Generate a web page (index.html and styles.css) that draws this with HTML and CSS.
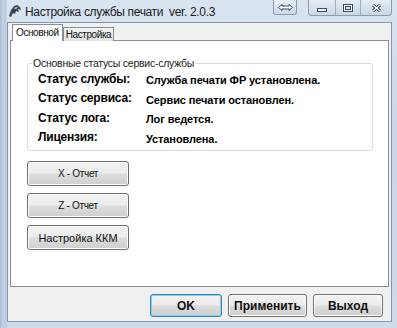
FILE: index.html
```html
<!doctype html>
<html>
  <head>
    <meta charset="UTF-8" />
    <title>Настройка службы печати</title>
    <link rel="stylesheet" href="styles.css">
  </head>

  <body>
    <div class="window">
      <div class="titlebar">
        <svg class="app-icon" width="14" height="14" viewBox="0 0 14 14">
          <path d="M1 12 L3 6 L6 2 L9 1 L12 3 L13 6 L10 5 L11 8 L8 7 L7 10 L5 9 L3 13 Z" fill="#3c4654" />
          <path d="M6 4 L9 3 L10 4 L7 5 Z" fill="#c8d2de" />
        </svg>
        <span class="title">Настройка службы печати&nbsp; ver. 2.0.3</span>
        <div class="caption">
          <span class="cap-help">
            <svg width="15" height="7" viewBox="0 0 15 7">
              <path d="M0.5 3.5 L4 0.5 L4 2 L11 2 L11 0.5 L14.5 3.5 L11 6.5 L11 5 L4 5 L4 6.5 Z" fill="#fff" stroke="#3b4a5e" stroke-width="1" />
            </svg>
          </span>
          <div class="cap-group">
            <span class="cap-btn cap-min"><i></i></span>
            <span class="cap-btn cap-max"><i></i></span>
            <span class="cap-btn cap-close">
              <svg width="9" height="8" viewBox="0 0 9 8">
                <path d="M1 1 L8 7 M8 1 L1 7" stroke="#3b4a5e" stroke-width="3" />
                <path d="M1 1 L8 7 M8 1 L1 7" stroke="#fff" stroke-width="1.2" />
              </svg>
            </span>
          </div>
        </div>
      </div>

      <div class="client">
        <div class="tabs">
          <div class="tab active">Основной</div>
          <div class="tab">Настройка</div>
        </div>

        <div class="tab-page">
          <fieldset class="group">
            <legend>Основные статусы сервис-службы</legend>
            <div class="status-row">
              <span class="label">Статус службы:</span>
              <span class="value">Служба печати ФР установлена.</span>
            </div>
            <div class="status-row">
              <span class="label">Статус сервиса:</span>
              <span class="value">Сервис печати остановлен.</span>
            </div>
            <div class="status-row">
              <span class="label">Статус лога:</span>
              <span class="value">Лог ведется.</span>
            </div>
            <div class="status-row">
              <span class="label">Лицензия:</span>
              <span class="value">Установлена.</span>
            </div>
          </fieldset>

          <div class="actions">
            <button type="button" class="btn small">X - Отчет</button>
            <button type="button" class="btn small">Z - Отчет</button>
            <button type="button" class="btn">Настройка ККМ</button>
          </div>
        </div>

        <div class="footer">
          <button type="button" class="btn bold default ok">OK</button>
          <button type="button" class="btn bold apply">Применить</button>
          <button type="button" class="btn bold exit">Выход</button>
        </div>
      </div>
    </div>
  </body>
</html>
```

FILE: styles.css
```css
* {
  box-sizing: border-box;
}

body {
  margin: 0;
  font-family: "Liberation Sans", Arial, sans-serif;
  color: #000;
}

.window {
  width: 397px;
  height: 328px;
  display: flex;
  flex-direction: column;
  background:
    linear-gradient(to right, #a9bcd2 0px, #c3d3e5 3px, #b7c9dd 6px, transparent 7px),
    linear-gradient(to bottom, #d9e4f1 0%, #c9d8e9 40%, #cddbeb 100%);
}

/* title bar */

.titlebar {
  height: 22px;
  display: flex;
  align-items: flex-start;
  flex: none;
}

.app-icon {
  margin: 4px 0 0 8px;
}

.title {
  margin: 5px 0 0 3px;
  font-size: 12px;
  letter-spacing: -0.35px;
  line-height: 14px;
  color: #1b1b1b;
  white-space: nowrap;
}

.caption {
  margin-left: auto;
  display: flex;
  align-items: flex-start;
}

.cap-help {
  width: 24px;
  height: 15px;
  margin-right: 11px;
  display: flex;
  align-items: center;
  justify-content: center;
  border: 1px solid #8c9bb0;
  border-top: none;
  border-radius: 0 0 3px 3px;
  background: linear-gradient(to bottom, #e9f0f8, #cad8e8);
}

.cap-group {
  height: 16px;
  margin-right: 5px;
  display: flex;
  border: 1px solid #8c9bb0;
  border-top: none;
  border-radius: 0 0 4px 4px;
  background: linear-gradient(to bottom, #e6eef7, #c9d7e7);
  overflow: hidden;
}

.cap-btn {
  display: flex;
  align-items: center;
  justify-content: center;
  border-left: 1px solid #9fadc0;
}

.cap-btn:first-child {
  border-left: none;
}

.cap-min {
  width: 26px;
}

.cap-min i {
  display: block;
  width: 10px;
  height: 4px;
  margin-top: 4px;
  background: #fff;
  border: 1px solid #3b4a5e;
}

.cap-max {
  width: 25px;
}

.cap-max i {
  display: block;
  width: 10px;
  height: 8px;
  border: 1px solid #3b4a5e;
  box-shadow: inset 0 0 0 1px #fff, inset 0 0 0 2px #3b4a5e;
  background: #d7e1ec;
}

.cap-close {
  width: 31px;
}

/* client area */

.client {
  flex: 1;
  margin: 0 5px 6px 7px;
  padding: 1px 1px 0 2px;
  background: #f0f0f0;
  border: 1px solid #8795a6;
  display: flex;
  flex-direction: column;
}

.tabs {
  display: flex;
  align-items: flex-end;
  height: 17px;
  padding-left: 2px;
  margin-bottom: -1px;
  position: relative;
  z-index: 1;
}

.tab {
  font-size: 10px;
  letter-spacing: -0.4px;
  border: 1px solid #898c95;
  border-bottom: none;
  padding: 0 2px;
  height: 14px;
  line-height: 13px;
  background: linear-gradient(to bottom, #f3f3f3, #e2e2e2);
  color: #111;
}

.tab.active {
  height: 17px;
  line-height: 16px;
  padding: 0 3px;
  background: #fff;
}

.tab-page {
  height: 247px;
  margin-right: 1px;
  border: 1px solid #898c95;
  background: #fff;
  padding: 16px 0 0 16px;
}

.group {
  width: 346px;
  height: 94px;
  margin: 0;
  padding: 0 10px 2px;
  border: 1px solid #dadada;
  border-radius: 3px;
}

.group legend {
  font-size: 10.5px;
  letter-spacing: -0.25px;
  line-height: 12px;
  padding: 0 1px;
  margin-left: -6px;
  color: #222;
}

.status-row {
  display: flex;
  align-items: center;
  height: 19.5px;
}

.label {
  width: 108px;
  font-size: 12px;
  font-weight: bold;
  letter-spacing: -0.2px;
}

.value {
  font-size: 11px;
  font-weight: bold;
  letter-spacing: -0.1px;
  margin-top: 3px;
}

.actions {
  display: flex;
  flex-direction: column;
  gap: 7px;
  margin-top: 10px;
  width: 102px;
}

/* buttons */

.btn {
  font-family: "Liberation Sans", Arial, sans-serif;
  height: 25px;
  padding: 0;
  border: 1px solid #707070;
  border-radius: 3px;
  background: linear-gradient(to bottom, #f2f2f2 0%, #ebebeb 48%, #dddddd 52%, #cfcfcf 100%);
  box-shadow: inset 0 0 0 1px #fbfbfb;
  font-size: 11px;
  color: #111;
}

.btn.small {
  font-size: 10px;
  letter-spacing: -0.3px;
}

.btn.bold {
  font-weight: bold;
  font-size: 12px;
  height: 23px;
}

.btn.default {
  border-color: #3c7fb1;
  box-shadow: inset 0 0 0 1px #7fd3f4;
}

.footer {
  display: flex;
  justify-content: flex-end;
  gap: 6px;
  padding: 7px 7px 0 0;
}

.ok {
  width: 72px;
}

.apply {
  width: 79px;
}

.exit {
  width: 70px;
}
```
